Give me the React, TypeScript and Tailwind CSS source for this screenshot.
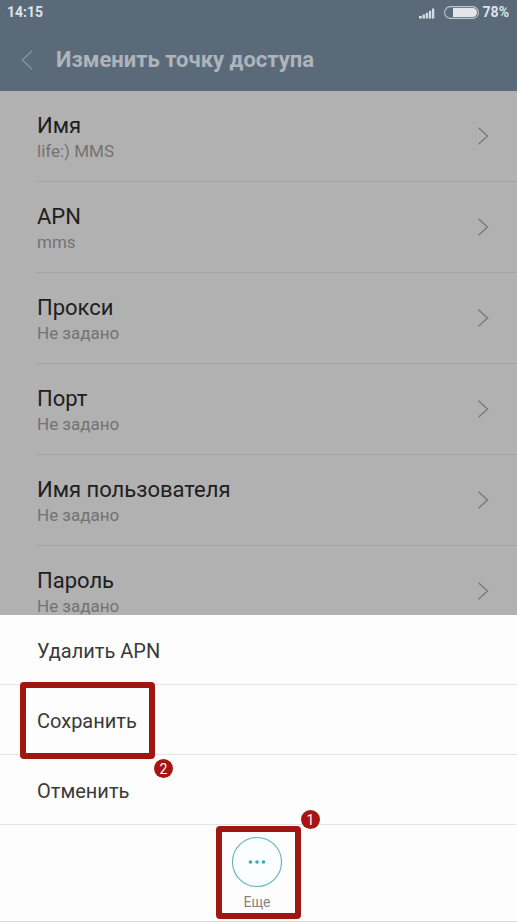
import React from "react";

const settings = [
  { title: "Имя", value: "life:) MMS" },
  { title: "APN", value: "mms" },
  { title: "Прокси", value: "Не задано" },
  { title: "Порт", value: "Не задано" },
  { title: "Имя пользователя", value: "Не задано" },
  { title: "Пароль", value: "Не задано" },
];

const actions = [
  { label: "Удалить APN" },
  { label: "Сохранить", step: 2 },
  { label: "Отменить" },
];

const StatusBar = () => (
  <div className="h-6 pl-[7px] pr-2 flex items-center justify-between text-sm font-bold text-[#dde3e9]">
    <span>14:15</span>
    <div className="flex items-center">
      {/* Signal */}
      <svg width="17" height="14" viewBox="0 0 17 14" fill="#d5dbe1">
        <path d="M0 11h2.8v2.5H0zM3.5 9.5h2.6v4H3.5zM6.8 7.8h2.4v5.7H6.8zM10 5.8h2.2v7.7H10zM13 3.5h2.3v10H13z" />
      </svg>
      {/* Battery */}
      <svg className="ml-2" width="35" height="13" viewBox="0 0 35 13">
        <rect x="0.6" y="0.6" width="33.8" height="11.8" rx="5.9" fill="none" stroke="#bcc6cf" strokeWidth="1.1" />
        <path d="M9 2h19.5a4.5 4.5 0 0 1 0 9H9z" fill="#e3e6e9" />
      </svg>
      <span className="ml-1">78%</span>
    </div>
  </div>
);

const Header = () => (
  <header className="shrink-0 h-[91px] bg-[#5b6a79] flex flex-col">
    <StatusBar />
    <div className="flex-1 pt-1 pl-5 flex items-center">
      <button aria-label="Назад" className="w-9 shrink-0">
        <svg width="14" height="20" viewBox="0 0 14 20" fill="none" stroke="#8792a0" strokeWidth="1.3">
          <path d="M12 0.8L2.5 10l9.5 9.2" />
        </svg>
      </button>
      <h1 className="text-[22px] leading-7 font-bold text-[#adb4bc] truncate">
        Изменить точку доступа
      </h1>
    </div>
  </header>
);

const SettingRow = ({ title, value }: { title: string; value: string }) => (
  <li className="pl-9">
    <button className="w-full h-[91px] pl-px pr-7 flex items-center justify-between text-left border-b border-[#a3a3a3]">
      <span className="pt-0.5">
        <span className="block text-[22px] leading-7 text-[#202020]">{title}</span>
        <span className="block text-[17px] leading-[22px] text-[#737373]">{value}</span>
      </span>
      <svg width="12" height="18" viewBox="0 0 12 18" fill="none" stroke="#777777" strokeWidth="1.3">
        <path d="M1.5 0.8L10.5 9l-9 8.2" />
      </svg>
    </button>
  </li>
);

// Red numbered dot at the corner of a highlighted control
const Badge = ({ step, className }: { step: number; className: string }) => (
  <span
    className={`absolute z-10 size-[19px] rounded-full bg-[#a8140f] flex items-center justify-center text-sm text-white ${className}`}
  >
    {step}
  </span>
);

const App = () => {
  return (
    <div className="h-screen flex flex-col overflow-hidden bg-[#b1b1b1] font-[Roboto,sans-serif]">
      <Header />

      <ul className="flex-1 min-h-0 overflow-hidden">
        {settings.map((item) => (
          <SettingRow key={item.title} title={item.title} value={item.value} />
        ))}
      </ul>

      {/* Bottom menu */}
      <div className="shrink-0 bg-[#fdfdfd] border-b border-[#d8d8d8]">
        {actions.map((action) => (
          <div key={action.label} className="h-[70px] pl-[37px] flex items-center border-b border-[#e6e6e6]">
            <button className="relative h-full pt-0.5 text-xl text-[#3a3a3a]">
              {action.label}
              {action.step && (
                <>
                  <span className="absolute -left-[17px] -right-[18px] -top-[3px] -bottom-[5px] border-6 border-[#a1160f] rounded-sm" />
                  <Badge step={action.step} className="-right-9 -bottom-6" />
                </>
              )}
            </button>
          </div>
        ))}

        <div className="h-24 flex justify-center">
          <button className="relative w-[85px] h-[93px] mt-px border-6 border-[#a1160f] rounded-sm flex flex-col items-center pt-1 pr-[3px]">
            <svg width="52" height="52" viewBox="0 0 52 52">
              <circle cx="26" cy="26" r="24.5" fill="#fafefe" stroke="#5fb3b8" strokeWidth="1.1" />
              <g fill="#35a9b5">
                <circle cx="19.5" cy="26" r="1.8" />
                <circle cx="26" cy="26" r="1.8" />
                <circle cx="32.5" cy="26" r="1.8" />
              </g>
            </svg>
            <span className="mt-1 text-sm text-[#858585]">Еще</span>
            <Badge step={1} className="-right-[25px] -top-[22px]" />
          </button>
        </div>
      </div>
    </div>
  );
};

export default App;
